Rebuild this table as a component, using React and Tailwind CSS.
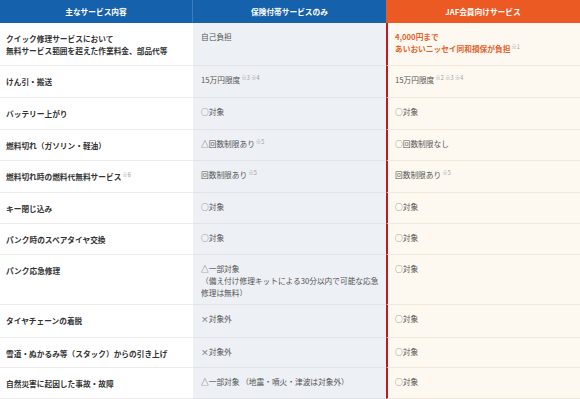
import React from "react";

const font = { fontFamily: '"Noto Sans CJK JP", "Noto Sans", sans-serif' };

function Sup({ children }) {
  return (
    <span className="inline-block align-top text-[5.5px] leading-[8px] font-normal text-[#9a9a9a] ml-[1px]">
      {children}
    </span>
  );
}

const rows = [
  {
    h: "h-[43px]",
    a: (
      <>
        クイック修理サービスにおいて
        <br />
        無料サービス範囲を超えた作業料金、部品代等
      </>
    ),
    b: "自己負担",
    c: (
      <span className="font-bold text-[#e2622b]">
        4,000円まで
        <br />
        あいおいニッセイ同和損保が負担
        <Sup>※1</Sup>
      </span>
    ),
  },
  {
    h: "h-[32px]",
    a: "けん引・搬送",
    b: (
      <>
        15万円限度<Sup>※3 ※4</Sup>
      </>
    ),
    c: (
      <>
        15万円限度<Sup>※2 ※3 ※4</Sup>
      </>
    ),
  },
  { h: "h-[32px]", a: "バッテリー上がり", b: "○対象", c: "○対象" },
  {
    h: "h-[31px]",
    a: "燃料切れ（ガソリン・軽油）",
    b: (
      <>
        △回数制限あり<Sup>※5</Sup>
      </>
    ),
    c: "○回数制限なし",
  },
  {
    h: "h-[32px]",
    a: (
      <>
        燃料切れ時の燃料代無料サービス<Sup>※6</Sup>
      </>
    ),
    b: (
      <>
        回数制限あり<Sup>※5</Sup>
      </>
    ),
    c: (
      <>
        回数制限あり<Sup>※5</Sup>
      </>
    ),
  },
  { h: "h-[31px]", a: "キー閉じ込み", b: "○対象", c: "○対象" },
  { h: "h-[31px]", a: "パンク時のスペアタイヤ交換", b: "○対象", c: "○対象" },
  {
    h: "h-[50px]",
    a: "パンク応急修理",
    b: (
      <>
        △一部対象
        <br />
        （備え付け修理キットによる30分以内で可能な応急
        <br />
        修理は無料）
      </>
    ),
    c: "○対象",
  },
  { h: "h-[33px]", a: "タイヤチェーンの着脱", b: "×対象外", c: "○対象" },
  {
    h: "h-[30px]",
    a: "雪道・ぬかるみ等（スタック）からの引き上げ",
    b: "×対象外",
    c: "○対象",
  },
  {
    h: "h-[31px]",
    a: "自然災害に起因した事故・故障",
    b: "△一部対象 （地震・噴火・津波は対象外）",
    c: "○対象",
  },
];

export default function App() {
  return (
    <div className="w-[580px] h-[399px] overflow-hidden bg-white" style={font}>
      <div className="flex h-[23px] text-[7.7px] font-bold text-white">
        <div className="w-[193px] bg-[#1661ab] flex items-center justify-center border-r border-[#3a7cbd]">
          主なサービス内容
        </div>
        <div className="w-[193px] bg-[#1661ab] flex items-center justify-center">
          保険付帯サービスのみ
        </div>
        <div className="flex-1 bg-[#eb5a23] flex items-center justify-center">
          JAF会員向けサービス
        </div>
      </div>
      {rows.map((r, i) => (
        <div key={i} className={`flex ${r.h} text-[7.7px] leading-[12px]`}>
          <div className="w-[193px] bg-white border-b border-[#ececec] pt-[10px] px-[6px] font-bold text-[#333] whitespace-nowrap">
            {r.a}
          </div>
          <div className="w-[193px] bg-[#edf0f4] border-b border-[#e0e3e8] pt-[7.5px] px-[8px] text-[#555] whitespace-nowrap">
            {r.b}
          </div>
          <div className="flex-1 bg-[#fdf9f0] border-l-2 border-l-[#c7161e] border-b border-b-[#efe8da] pt-[7.5px] px-[7px] text-[#555] whitespace-nowrap">
            {r.c}
          </div>
        </div>
      ))}
    </div>
  );
}
